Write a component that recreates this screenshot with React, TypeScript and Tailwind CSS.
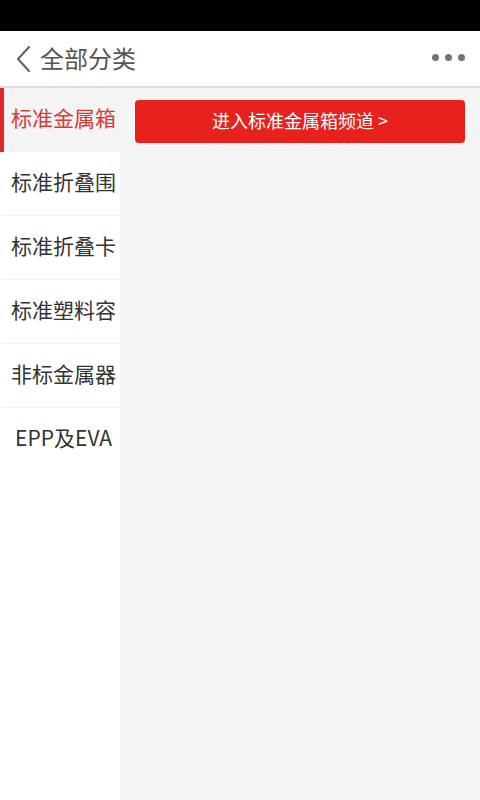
import React from "react";

const items = ["标准金属箱", "标准折叠围", "标准折叠卡", "标准塑料容", "非标金属器", "EPP及EVA"];

export default function App() {
  return (
    <div
      className="w-[480px] h-[800px] flex flex-col bg-white overflow-hidden"
      style={{ fontFamily: '"Noto Sans CJK SC", "Noto Sans", sans-serif' }}
    >
      <div className="h-[31px] bg-black shrink-0" />
      <div className="h-[57px] shrink-0 flex items-center bg-white border-b-2 border-[#dcdcdc] pl-[14px] pr-[15px]">
        <svg width="20" height="28" viewBox="0 0 20 28" className="shrink-0">
          <path d="M15 2 L4 14 L15 26" fill="none" stroke="#666" strokeWidth="2.2" strokeLinecap="round" strokeLinejoin="round" />
        </svg>
        <span className="ml-[6px] text-[24px] text-[#555] leading-none pb-[2px]">全部分类</span>
        <div className="ml-auto flex items-center gap-[6px] pb-[2px]">
          <span className="w-[7px] h-[7px] rounded-full bg-[#747474]" />
          <span className="w-[7px] h-[7px] rounded-full bg-[#747474]" />
          <span className="w-[7px] h-[7px] rounded-full bg-[#747474]" />
        </div>
      </div>
      <div className="flex flex-1 min-h-0">
        <div className="w-[120px] shrink-0 bg-white flex flex-col">
          {items.map((t, i) =>
            i === 0 ? (
              <div key={t} className="h-[64px] flex items-center bg-[#f4f4f4] border-l-4 border-[#e0262a] pb-[5px]">
                <span className="flex-1 text-center text-[21px] text-[#d83a36] leading-none pl-[3px]">{t}</span>
              </div>
            ) : (
              <div key={t} className={"h-[64px] flex items-center ml-[3px] pb-[5px] " + (i < items.length - 1 ? "border-b border-[#f0f0f0]" : "")}>
                <span className="flex-1 text-center text-[21px] text-[#333] leading-none pl-[4px]">{t}</span>
              </div>
            )
          )}
        </div>
        <div className="flex-1 bg-[#f4f4f4] pt-[12px] pl-[15px] pr-[15px]">
          <div className="h-[43px] rounded-[4px] bg-[#e8211c] flex items-center justify-center text-white text-[18px] leading-none pb-[3px]">
            进入标准金属箱频道 &gt;
          </div>
        </div>
      </div>
    </div>
  );
}
